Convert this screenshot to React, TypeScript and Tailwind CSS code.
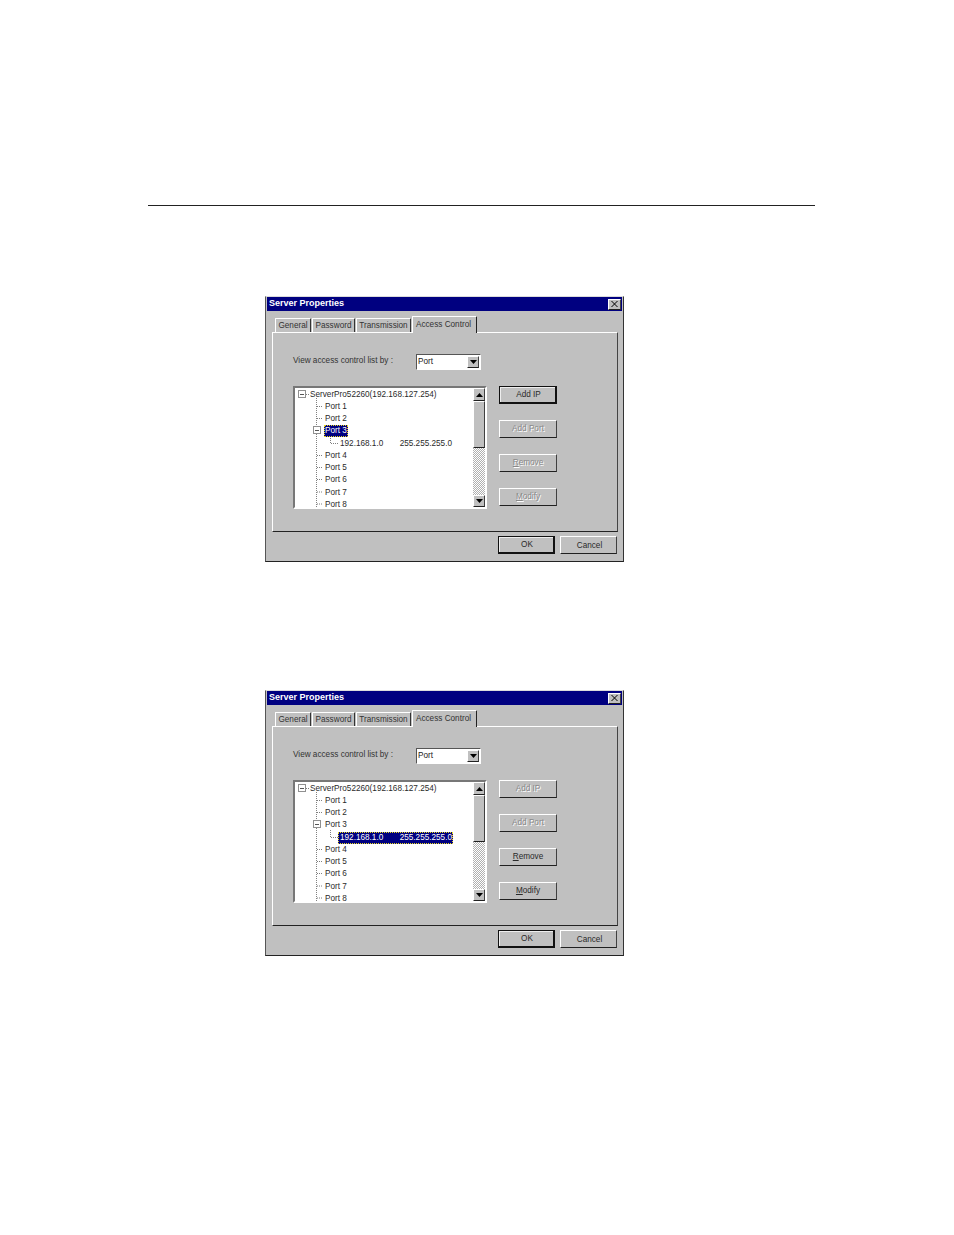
const PORTS_BEFORE = ['Port 1', 'Port 2']
const PORTS_AFTER = ['Port 4', 'Port 5', 'Port 6', 'Port 7', 'Port 8']
const TABS = [
  { label: 'General', width: 'w-[36px]' },
  { label: 'Password', width: 'w-[43px]' },
  { label: 'Transmission', width: 'w-[55px]' },
]

const bevel = 'border border-t-white border-l-white border-r-[#404040] border-b-[#202020]'

function Arrow({ up }: { up?: boolean }) {
  return (
    <svg width="7" height="4" viewBox="0 0 7 4" className="block">
      <path d={up ? 'M3.5 0 L7 4 L0 4 Z' : 'M0 0 L7 0 L3.5 4 Z'} fill="#000" />
    </svg>
  )
}

function Expander({ className }: { className: string }) {
  return (
    <span className={`absolute flex h-[8px] w-[8px] items-center justify-center border border-[#909090] bg-white ${className}`}>
      <span className="h-px w-[4px] bg-[#555]" />
    </span>
  )
}

function DlgButton({ label, hot, disabled, isDefault, className = '' }: { label: string; hot?: string; disabled?: boolean; isDefault?: boolean; className?: string }) {
  const rest = hot ? label.slice(1) : label
  return (
    <div
      className={`flex items-center justify-center bg-[#c0c0c0] text-[8.2px] ${isDefault ? 'border border-r-2 border-b-2 border-[#111] pl-[2px] pt-[2px] shadow-[inset_1px_1px_0_#eee]' : bevel} ${disabled ? 'text-[#8a8a8a] [text-shadow:1px_1px_0_#fff]' : 'text-[#2a2a2a]'} ${className}`}
    >
      {hot && <span className="underline">{hot}</span>}
      {rest}
    </div>
  )
}

function PortRow({ label }: { label: string }) {
  return <div className="h-[12.25px] pl-[30px] leading-[12px]">{label}</div>
}

function Tree({ selectedChild }: { selectedChild: boolean }) {
  return (
    <div className="relative h-full flex-1 bg-white pt-[0.6px] text-[8.2px] text-[#2a2a2a]">
      <svg width="60" height="119" className="absolute left-0 top-0">
        <g stroke="#808080" strokeDasharray="1 1" fill="none">
          <path d="M21.5 10 V119" />
          <path d="M11 6.5 H14" />
          <path d="M22 18.5 H28 M22 30.5 H28 M22 67.5 H28 M22 79.5 H28 M22 91.5 H28 M22 104 H28 M22 116 H28" />
          <path d="M35.5 48 V55.5 H43" />
        </g>
      </svg>
      <Expander className="left-[3px] top-[2px]" />
      <Expander className="left-[18px] top-[38px]" />
      <div className="relative h-[12.25px] pl-[15px] leading-[12px]">ServerPro52260(192.168.127.254)</div>
      {PORTS_BEFORE.map(p => <div key={p} className="relative"><PortRow label={p} /></div>)}
      <div className="relative h-[12.25px] pl-[29px] leading-[12px]">
        <span className={`inline-block h-[12px] w-[24px] border leading-[10px] ${selectedChild ? 'border-transparent' : 'border-dotted border-[#e8d820] bg-[#000080] text-white'}`}>Port 3</span>
      </div>
      <div className="relative h-[12.25px] pl-[43px] leading-[12px]">
        <span className={`flex h-[12px] w-[115px] border pl-[1px] leading-[10px] ${selectedChild ? 'border-dotted border-[#e8d820] bg-[#000080] text-white' : 'border-transparent'}`}>
          <span className="w-[60px]">192.168.1.0</span>
          <span>255.255.255.0</span>
        </span>
      </div>
      {PORTS_AFTER.map(p => <div key={p} className="relative"><PortRow label={p} /></div>)}
    </div>
  )
}

function ScrollBar() {
  return (
    <div className="relative flex h-full w-[12px] flex-col">
      <div className={`flex h-[13px] items-center justify-center bg-[#c0c0c0] ${bevel}`}><Arrow up /></div>
      <div className={`h-[47px] bg-[#c0c0c0] ${bevel}`} />
      <div className="flex-1 bg-[repeating-conic-gradient(#fff_0_25%,#b0b0b0_0_50%)] bg-[length:2px_2px]" />
      <div className={`flex h-[12px] items-center justify-center bg-[#c0c0c0] ${bevel}`}><Arrow /></div>
    </div>
  )
}

function ServerDialog({ ipSelected }: { ipSelected: boolean }) {
  return (
    <div className="ml-[265px] h-[266px] w-[359px] border border-t-[#dcdcdc] border-l-[#555] border-r-[#333] border-b-[#222] bg-[#c0c0c0] px-[1px] font-['Liberation_Sans',sans-serif]">
      <div className="flex h-[14px] items-center justify-between bg-[#000080] pl-[2px] pr-[1px] text-[9px] font-bold text-white">
        <span>Server Properties</span>
        <span className={`flex h-[11px] w-[13px] items-center justify-center bg-[#c0c0c0] ${bevel}`}>
          <svg width="7" height="6" viewBox="0 0 7 6"><path d="M0.5 0 L6.5 6 M6.5 0 L0.5 6" stroke="#000" strokeWidth="1" /></svg>
        </span>
      </div>

      <div className="mt-[5px] flex h-[16px] items-end pl-[8px]">
        {TABS.map(tab => (
          <div key={tab.label} className={`mr-[1px] flex h-[14px] items-center justify-center rounded-t-[1px] border border-b-0 border-t-white border-l-white border-r-[#333] pt-[2px] text-[8.2px] text-[#333] ${tab.width}`}>
            {tab.label}
          </div>
        ))}
        <div className="relative z-10 -mb-[1px] flex h-[17px] w-[65px] items-center justify-center rounded-t-[1px] border border-b-0 border-t-white border-l-white border-r-[#222] bg-[#c0c0c0] pr-[2px] text-[8.2px] text-[#333]">
          Access Control
        </div>
      </div>

      <div className="ml-[5px] h-[200px] w-[346px] border border-t-white border-l-white border-r-[#444] border-b-[#222] pl-[20px] pt-[21px]">
        <div className="flex h-[16px] items-center text-[8.2px] text-[#333]">
          <span className="w-[123px] pb-[2px]">View access control list by :</span>
          <div className="flex h-[16px] w-[65px] items-center justify-between border border-t-[#555] border-l-[#555] border-r-white border-b-white bg-white pl-[1px] pr-[1px] text-[#222]">
            <span>Port</span>
            <span className={`flex h-[12px] w-[12px] items-center justify-center bg-[#c0c0c0] ${bevel}`}><Arrow /></span>
          </div>
        </div>

        <div className="mt-[16px] flex">
          <div className="flex h-[123px] w-[194px] shrink-0 border-2 border-t-[#777] border-l-[#777] border-r-white border-b-white">
            <Tree selectedChild={ipSelected} />
            <ScrollBar />
          </div>
          <div className="ml-[12px] flex w-[58px] shrink-0 flex-col gap-[16px]">
            <DlgButton label="Add IP" className="h-[18px]" disabled={ipSelected} isDefault={!ipSelected} />
            <DlgButton label="Add Port" className="h-[18px]" disabled />
            <DlgButton label="Remove" hot="R" className="h-[18px]" disabled={!ipSelected} />
            <DlgButton label="Modify" hot="M" className="h-[18px]" disabled={!ipSelected} />
          </div>
        </div>
      </div>

      <div className="mt-[4px] flex justify-end gap-[5px] pr-[5px]">
        <DlgButton label="OK" isDefault className="h-[18px] w-[57px]" />
        <DlgButton label="Cancel" className="h-[18px] w-[57px] pl-[2px] pt-[2px]" />
      </div>
    </div>
  )
}

export default function App() {
  return (
    <div className="h-[1235px] w-[954px] overflow-hidden bg-white pt-[205px]">
      <div className="ml-[148px] h-px w-[667px] bg-[#222]" />
      <div className="mt-[90px]">
        <ServerDialog ipSelected={false} />
      </div>
      <div className="mt-[128px]">
        <ServerDialog ipSelected />
      </div>
    </div>
  )
}
